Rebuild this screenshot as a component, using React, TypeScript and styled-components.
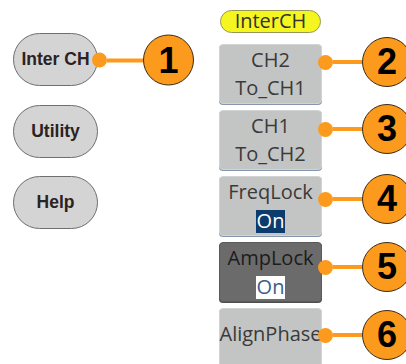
import styled, { createGlobalStyle } from "styled-components";

const GlobalStyle = createGlobalStyle`
  html, body {
    margin: 0;
    padding: 0;
    background: #ffffff;
  }
  body {
    width: 406px;
    height: 364px;
    overflow: hidden;
  }
`;

const ORANGE = "#fb9a1c";

const Stage = styled.div`
  position: relative;
  width: 406px;
  height: 364px;
  overflow: hidden;
  display: flex;
  align-items: flex-start;
`;

const FrontPanel = styled.div`
  display: flex;
  flex-direction: column;
  gap: 18.5px;
  padding: 33px 0 0 13px;
`;

const HardKey = styled.div`
  box-sizing: border-box;
  width: 85px;
  height: 53px;
  border-radius: 27px;
  background: #d4d4d4;
  border: 1.5px solid #6e6e6e;
  display: flex;
  align-items: center;
  justify-content: center;
  font-family: "Liberation Sans", Arial, sans-serif;
  font-weight: 700;
  font-size: 17.5px;
  color: #2b2222;
`;

const Menu = styled.div`
  display: flex;
  flex-direction: column;
  margin-left: 121px;
  padding-top: 10px;
  font-family: "Open Sans", "DejaVu Sans", sans-serif;
`;

const MenuTitle = styled.div`
  box-sizing: border-box;
  width: 101px;
  height: 23px;
  margin-left: 1px;
  margin-bottom: 11px;
  border-radius: 12px;
  background: #f5f520;
  border: 1px solid #97975a;
  text-align: center;
  font-size: 20px;
  line-height: 20px;
  color: #333;
`;

const SoftKeys = styled.div`
  display: flex;
  flex-direction: column;
  gap: 6px;
`;

const SoftKey = styled.div<{ $dark?: boolean; $single?: boolean }>`
  box-sizing: border-box;
  width: 103px;
  height: 60px;
  border-radius: 4px;
  display: flex;
  flex-direction: column;
  align-items: center;
  padding-top: ${(p) => (p.$single ? "11px" : "1px")};
  background: ${(p) => (p.$dark ? "#6b6b6b" : "#c3c5c4")};
  border: 1px solid ${(p) => (p.$dark ? "#5a5a5a" : "#d2d4d3")};
  box-shadow: 0 1px 0 ${(p) => (p.$dark ? "#4e4e4e" : "#8697ad")};
  color: ${(p) => (p.$dark ? "#1c1c1c" : "#3a3a3a")};
  font-size: 20px;
  white-space: nowrap;
`;

const Label = styled.div`
  height: 28px;
  line-height: 28px;
`;

const Value = styled.span<{ $inverse?: boolean }>`
  display: inline-block;
  margin-top: 4px;
  padding: 0 1px;
  height: 23px;
  line-height: 22px;
  background: ${(p) => (p.$inverse ? "#ffffff" : "#0c3b6e")};
  color: ${(p) => (p.$inverse ? "#3b5d8a" : "#ffffff")};
`;

const Callout = styled.div<{ $x: number; $y: number }>`
  position: absolute;
  left: ${(p) => p.$x}px;
  top: ${(p) => p.$y}px;
  transform: translateY(-50%);
  display: flex;
  align-items: center;
`;

const Dot = styled.span`
  width: 15px;
  height: 15px;
  border-radius: 50%;
  background: ${ORANGE};
  flex: none;
`;

const Leader = styled.span<{ $length: number }>`
  width: ${(p) => p.$length}px;
  height: 4px;
  background: ${ORANGE};
  flex: none;
`;

const Badge = styled.span<{ $size: number }>`
  box-sizing: border-box;
  flex: none;
  width: ${(p) => p.$size}px;
  height: ${(p) => p.$size}px;
  border-radius: 50%;
  background: ${ORANGE};
  border: 1.5px solid #3b2b14;
  display: flex;
  align-items: center;
  justify-content: center;
  font-family: "Liberation Sans", Arial, sans-serif;
  font-weight: 700;
  font-size: 36px;
  line-height: 1;
  color: #000;
`;

const menuCallouts = [62, 129, 199, 267, 335];

export default function App() {
  return (
    <Stage>
      <GlobalStyle />
      <FrontPanel>
        <HardKey>Inter CH</HardKey>
        <HardKey>Utility</HardKey>
        <HardKey>Help</HardKey>
      </FrontPanel>

      <Menu>
        <MenuTitle>InterCH</MenuTitle>
        <SoftKeys>
          <SoftKey>
            <Label>CH2</Label>
            <Label>To_CH1</Label>
          </SoftKey>
          <SoftKey>
            <Label>CH1</Label>
            <Label>To_CH2</Label>
          </SoftKey>
          <SoftKey>
            <Label>FreqLock</Label>
            <Value>On</Value>
          </SoftKey>
          <SoftKey $dark>
            <Label>AmpLock</Label>
            <Value $inverse>On</Value>
          </SoftKey>
          <SoftKey $single>
            <Label>AlignPhase</Label>
          </SoftKey>
        </SoftKeys>
      </Menu>

      <Callout $x={92} $y={60}>
        <Dot />
        <Leader $length={36} />
        <Badge $size={51}>1</Badge>
      </Callout>
      {menuCallouts.map((y, i) => (
        <Callout key={y} $x={318} $y={y}>
          <Dot />
          <Leader $length={29} />
          <Badge $size={50}>{i + 2}</Badge>
        </Callout>
      ))}
    </Stage>
  );
}
